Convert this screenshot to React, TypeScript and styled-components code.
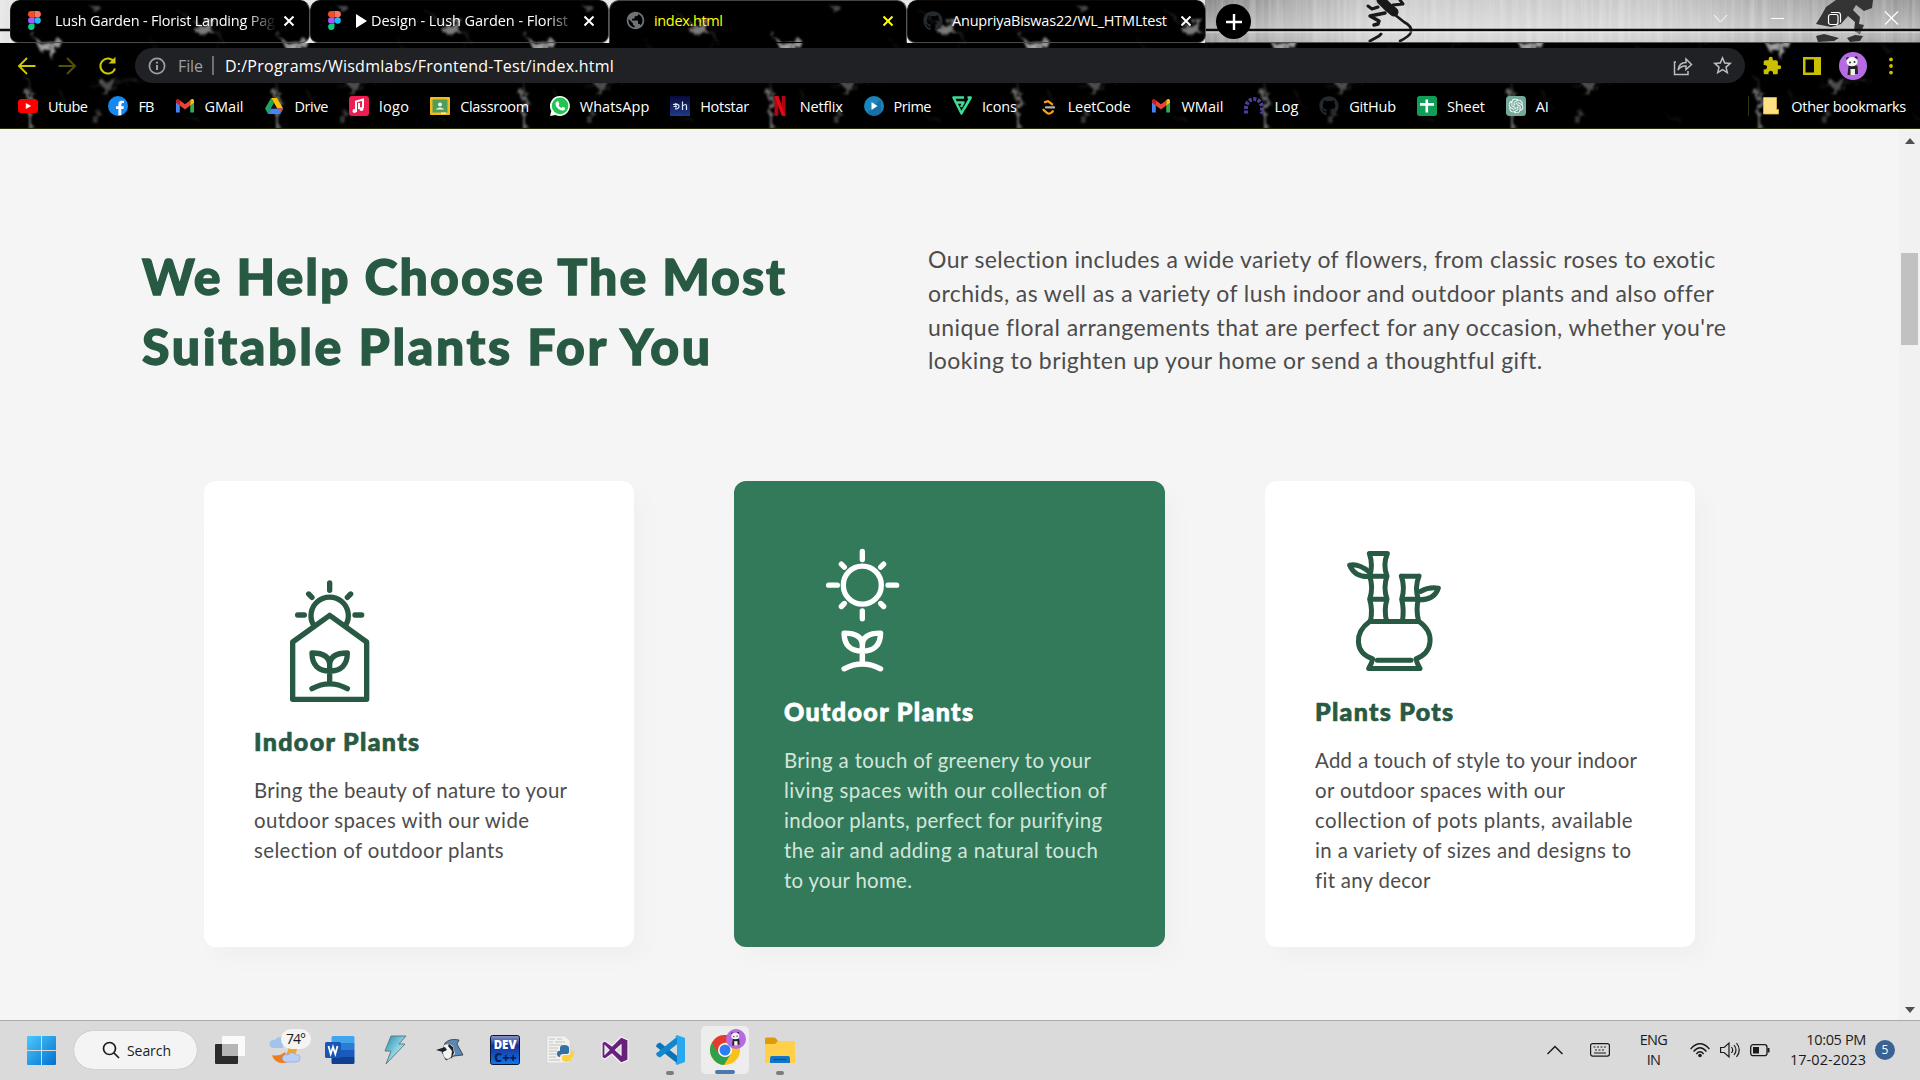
import React, { useLayoutEffect, useRef, useState } from "react";
import styled, { createGlobalStyle, css } from "styled-components";
import { MdExtension, MdStarBorder, MdPublic } from "react-icons/md";
import { FaGithub, FaFacebookF } from "react-icons/fa";
import { SiOpenai } from "react-icons/si";

const ui = `"Open Sans", "Noto Sans", sans-serif`;
const copy = `Lato, "Open Sans", sans-serif`;

const Global = createGlobalStyle`
  *, *::before, *::after { box-sizing: border-box; }
  body { margin: 0; overflow: hidden; background: #f5f5f5; font-family: ${ui}; }
  svg { display: block; flex: none; }
`;

/* ---------- text that tracks itself out to a given measure ---------- */

const Tracked = styled.span`
  display: block;
  white-space: pre;
`;

function Fit({ w, children }: { w: number; children: string }) {
  const ref = useRef<HTMLSpanElement>(null);
  const [spacing, setSpacing] = useState(0);
  useLayoutEffect(() => {
    const range = document.createRange();
    range.selectNodeContents(ref.current!);
    const natural = range.getBoundingClientRect().width;
    setSpacing((w - natural) / (children.length - 1 || 1));
  }, [w, children]);
  return (
    <Tracked ref={ref} style={{ letterSpacing: spacing }}>
      {children}
    </Tracked>
  );
}

/* ---------- theme artwork ---------- */

const Backdrop = styled.svg`
  position: absolute;
  left: 0;
  top: 0;
  width: 100%;
  height: 100%;
  pointer-events: none;
`;

function Marble({ x, y, w, h }: { x: number; y: number; w: number; h: number }) {
  const id = `marble-${x}-${y}`;
  return (
    <Backdrop viewBox={`${x} ${y} ${w} ${h}`} preserveAspectRatio="none">
      <defs>
        <filter id={`${id}-rough`} x="-30%" y="-30%" width="160%" height="160%">
          <feTurbulence type="fractalNoise" baseFrequency="0.13" numOctaves="4" seed="8" result="n" />
          <feDisplacementMap in="SourceGraphic" in2="n" scale="14" xChannelSelector="R" yChannelSelector="G" />
          <feGaussianBlur stdDeviation="1.2" />
        </filter>
        <pattern id={id} width="247" height="129" patternUnits="userSpaceOnUse">
          <g filter={`url(#${id}-rough)`} fill="#fff" stroke="#fff" strokeLinecap="round">
            <path d="M36 41l12 3 10-4 2 4-7 5 1 9-6-6-10-5z" opacity=".6" strokeWidth="0" />
            <path d="M46 46l6 12M38 42l-8-8" opacity=".25" strokeWidth="2" fill="none" />
            <path d="M190 20l8 6 14-5 2 16-8-3-8-2z" opacity=".48" strokeWidth="0" />
            <path d="M190 18l-9-7M214 34l8 8" opacity=".18" strokeWidth="2" fill="none" />
            <path d="M88 3l10 0 5 7-9 1z" opacity=".28" strokeWidth="0" />
            <path d="M100 82l10 1 5-6-2 13-7 6-3-8z" opacity=".3" strokeWidth="0" />
            <path d="M112 82l28-2M104 84l-12 3" opacity=".12" strokeWidth="2" fill="none" />
            <path d="M27 92l4 9-2 12 1 16" opacity=".42" strokeWidth="4.5" fill="none" />
            <path d="M31 94l-5-18M31 107l5-3" opacity=".2" strokeWidth="2" fill="none" />
            <path d="M96 110l4 6-6 6" opacity=".28" strokeWidth="2.5" fill="none" />
            <path d="M184 116l12 4M60 90l8 20M150 40l10 12" opacity=".08" strokeWidth="2" fill="none" />
          </g>
        </pattern>
      </defs>
      <rect x={x} y={y} width={w} height={h} fill={`url(#${id})`} />
    </Backdrop>
  );
}

function SteelBackdrop() {
  return (
    <Backdrop viewBox="0 0 1920 43" preserveAspectRatio="none">
      <defs>
        <linearGradient id="steel" gradientUnits="userSpaceOnUse" x1="1205" x2="1920">
          <stop offset="0" stopColor="#858585" />
          <stop offset=".1" stopColor="#a4a4a4" />
          <stop offset=".25" stopColor="#cdcdcd" />
          <stop offset=".6" stopColor="#c9c9c9" />
          <stop offset=".8" stopColor="#acacac" />
          <stop offset="1" stopColor="#949494" />
        </linearGradient>
        <filter id="brushed" x="0" y="0" width="100%" height="100%">
          <feTurbulence type="fractalNoise" baseFrequency="0.16 0.004" numOctaves="3" seed="4" />
          <feColorMatrix values="0 0 0 0 1  0 0 0 0 1  0 0 0 0 1  1.7 0 0 0 -.62" />
        </filter>
        <linearGradient id="glow" x1="0" x2="0" y1="0" y2="1">
          <stop offset="0" stopColor="#fff" stopOpacity="0" />
          <stop offset=".7" stopColor="#fff" stopOpacity=".32" />
          <stop offset="1" stopColor="#fff" stopOpacity=".1" />
        </linearGradient>
      </defs>
      <rect width="1205" height="43" fill="#e4e4e4" />
      <rect x="1205" width="715" height="43" fill="url(#steel)" />
      <rect width="1920" height="43" filter="url(#brushed)" opacity=".35" />
      <rect x="1205" width="715" height="43" fill="url(#glow)" />
      <g fill="none" stroke="#191919" strokeLinecap="round" strokeLinejoin="round">
        <path d="M1381 0l7 7 6 5" strokeWidth="9" />
        <path d="M1378 7l-6 2-4-3M1400 0l3 4-10 1" strokeWidth="3" />
        <path d="M1385 13l-15 3 9 5-1 3-4 1" strokeWidth="3.5" />
        <path d="M1394 14l10 8c6 3 8 6 7 10-1 4-7 7-11 9" strokeWidth="2.6" />
        <path d="M1370 41l9-5 2-2" strokeWidth="3" />
      </g>
      <g fill="#343434">
        <path d="M1826 7l10-7h37l-1 8-8 3-8-6-3 5 7 7-1 7 5 1-4 9-6-3 1-9-7-6-7 8-10 3-15-3 5-8z" />
        <path d="M1816 36l8-2 15 4-5 3-16 1zM1847 38l8-3 8 1-3 5-10 1z" />
      </g>
      <path d="M0 30h1920" stroke="#0b0b0b" strokeWidth="2.4" />
      <path d="M1205 32h715" stroke="#fff" strokeOpacity=".55" strokeWidth="1" />
      <path d="M1205 42.5h715" stroke="#555" />
    </Backdrop>
  );
}

/* ---------- browser chrome ---------- */

const Browser = styled.header`
  height: 129px;
  background: #000;
  display: flex;
  flex-direction: column;
  color: #fff;
  font-size: 14.5px;
`;

const TabStrip = styled.div`
  position: relative;
  height: 43px;
  padding-left: 10px;
  display: flex;
  align-items: flex-start;
`;

const TabBox = styled.div<{ $active?: boolean; $w: number }>`
  position: relative;
  overflow: hidden;
  width: ${(p) => p.$w}px;
  height: 43px;
  padding: 0 12px 2px 15px;
  background: #000;
  border: 1px solid #555;
  border-top-color: ${(p) => (p.$active ? "#444" : "#0a0a0a")};
  border-left-color: ${(p) => (p.$active ? "#444" : "#1c1c1c")};
  border-bottom-color: ${(p) => (p.$active ? "#000" : "#4a4a4a")};
  border-radius: 10px 10px ${(p) => (p.$active ? "0 0" : "8px 8px")};
  display: flex;
  align-items: center;
  color: ${(p) => (p.$active ? "#ff0" : "#fff")};
  & > * { flex: none; }
`;

const TabIcon = styled.div`
  width: 20px;
  display: flex;
  justify-content: center;
  position: relative;
`;

const TabTitle = styled.div<{ $fade?: boolean }>`
  position: relative;
  margin-left: 9px;
  width: 222px;
  display: flex;
  align-items: center;
  gap: 4px;
  overflow: hidden;
  ${(p) => p.$fade && css`mask-image: linear-gradient(90deg, #000 86%, transparent 100%);`}
`;

const CloseIcon = styled.svg`
  position: relative;
  margin-left: 6px;
  width: 12px;
  height: 12px;
`;

const NewTab = styled.div`
  position: relative;
  margin: 4px 0 0 10px;
  width: 35px;
  height: 35px;
  border-radius: 50%;
  background: #000;
  display: grid;
  place-items: center;
`;

const WindowControls = styled.div`
  position: relative;
  margin-left: auto;
  padding: 10px 21px 0 0;
  display: flex;
  gap: 42px;
`;

const Toolbar = styled.div`
  position: relative;
  height: 86px;
  border-bottom: 1px solid #2d2c08;
`;

const NavRow = styled.div`
  position: relative;
  height: 44px;
  padding: 5px 25px 4px 17px;
  display: flex;
  align-items: center;
`;

const NavButtons = styled.div`
  width: 118px;
  flex: none;
  display: flex;
  align-items: center;
  gap: 20px;
`;

const Address = styled.div`
  width: 1610px;
  flex: none;
  height: 35px;
  border-radius: 18px;
  background: #202124;
  display: flex;
  align-items: center;
  padding: 0 11px 0 13px;
  font-size: 16px;
`;

const Scheme = styled.div`
  margin-left: 12px;
  color: #9aa0a6;
`;

const Divider = styled.div`
  width: 2px;
  height: 19px;
  margin: 0 11px 0 9px;
  background: #6d7074;
`;

const AddressActions = styled.div`
  margin-left: auto;
  display: flex;
  align-items: center;
  gap: 18px;
  color: #b9bcc0;
`;

const Extensions = styled.div`
  margin-left: auto;
  width: 133px;
  display: grid;
  grid-template-columns: 41px 36px 49px 6px;
  align-items: center;
  color: #cbc000;
`;

const BookmarkRow = styled.nav`
  position: relative;
  height: 41px;
  padding: 0 14px 3px 18px;
  display: flex;
  align-items: center;
  gap: 20.9px;
`;

const Bookmark = styled.div`
  display: flex;
  align-items: center;
  gap: 10px;
`;

const OtherBookmarks = styled.div`
  margin-left: auto;
  padding-left: 14px;
  height: 20px;
  border-left: 1px solid #37370b;
  display: flex;
  align-items: center;
  gap: 10px;
`;

function Figma() {
  return (
    <svg width="17" height="19" viewBox="0 0 17 19">
      <path d="M3.2 0h3.3v6.3H3.2a3.15 3.15 0 010-6.3z" fill="#f24e1e" />
      <path d="M6.5 0h3.2a3.15 3.15 0 010 6.3H6.5z" fill="#ff7262" />
      <path d="M3.2 6.3h3.3v6.3H3.2a3.15 3.15 0 010-6.3z" fill="#a259ff" />
      <circle cx="9.7" cy="9.5" r="3.15" fill="#1abcfe" />
      <path d="M3.2 12.7h3.3v3.1a3.2 3.2 0 11-3.3-3.1z" fill="#0acf83" />
    </svg>
  );
}

function Close() {
  return (
    <CloseIcon viewBox="0 0 12 12" fill="none" stroke="currentColor" strokeWidth="2">
      <path d="M1.5 1.5l9 9M10.5 1.5l-9 9" />
    </CloseIcon>
  );
}

function Panda({ size }: { size: number }) {
  return (
    <svg width={size} height={size} viewBox="0 0 28 28">
      <circle cx="14" cy="14" r="14" fill="#b66be2" />
      <path d="M9.500 14q4.500-2 9 0l.5 8h-3v-4h-4v5H8.500z" fill="#222" />
      <path d="M11.500 17h4.500v6h-4.500z" fill="#eee" />
      <circle cx="8.8" cy="6.5" r="1.600" fill="#222" />
      <circle cx="17" cy="5.8" r="1.600" fill="#222" />
      <ellipse cx="13" cy="9.700" rx="5.600" ry="4.600" fill="#f5f5f5" />
      <circle cx="11" cy="10.5" r="1" fill="#333" />
      <circle cx="15.5" cy="10" r="1" fill="#333" />
    </svg>
  );
}

const GmailIcon = () => (
  <svg width="20" height="20" viewBox="0 0 20 20">
    <path d="M1 5v11.5h3.8V8z" fill="#4285f4" />
    <path d="M15.2 8v8.5H19V5z" fill="#34a853" />
    <path d="M15.2 4.8V9.5L19 6.700V5c0-2-2-2.500-3.300-1.400z" fill="#fbbc04" />
    <path d="M1 5v1.700l3.800 2.800V4.800l-.5-1.200C3 2.500 1 3.200 1 5z" fill="#c5221f" />
    <path d="M4.8 4.300v5.200L10 13.400l5.200-3.900V4.300L10 8.200z" fill="#ea4335" />
  </svg>
);

const bookmarks: { label: string; w: number; icon: React.ReactNode }[] = [
  { label: "Utube", w: 40, icon: (
    <svg width="20" height="20" viewBox="0 0 20 20"><rect y="3" width="20" height="14" rx="3.6" fill="#f00" /><path d="M7.8 7l5.400 3-5.400 3z" fill="#fff" /></svg>) },
  { label: "FB", w: 16, icon: (
    <svg width="20" height="20" viewBox="0 0 20 20"><circle cx="10" cy="10" r="10" fill="#1589f0" /><FaFacebookF x="4.5" y="4.5" width="11" height="15" color="#fff" size="15" /></svg>) },
  { label: "GMail", w: 39, icon: <GmailIcon /> },
  { label: "Drive", w: 34, icon: (
    <svg width="20" height="20" viewBox="0 0 20 20"><path d="M7 2h6l6.200 10.500h-6z" fill="#fbbc04" /><path d="M7 2l3 5.200L4 18 1 12.500z" fill="#1fa463" /><path d="M6.8 12.500h12.400L16.200 18H4z" fill="#4285f4" /><path d="M13.200 12.500h6L17.400 15.800z" fill="#ea4335" /><path d="M10 7.200l3.200 5.300H6.900z" fill="#111" /></svg>) },
  { label: "logo", w: 30, icon: (
    <svg width="20" height="20" viewBox="0 0 20 20"><rect width="20" height="20" rx="3" fill="#ee1d50" /><path d="M7 14V5.500l7-2V12M7 14v2M10 13V7" stroke="#fff" strokeWidth="2" fill="none" /><circle cx="5.500" cy="15" r="2" fill="#fff" /><circle cx="12.500" cy="13" r="2" fill="#fff" /></svg>) },
  { label: "Classroom", w: 69, icon: (
    <svg width="20" height="20" viewBox="0 0 20 20"><rect y="1" width="20" height="18" rx="1" fill="#f6bc16" /><rect x="2.500" y="3.500" width="15" height="13" fill="#4f9d59" /><circle cx="10" cy="8.500" r="2" fill="#e9f5ea" /><path d="M5.500 13.500q4.500-3.800 9 0z" fill="#e9f5ea" /><path d="M11 16.500h5v1.400h-5z" fill="#eee" /></svg>) },
  { label: "WhatsApp", w: 69.5, icon: (
    <svg width="20" height="20" viewBox="0 0 20 20"><path d="M10 0a10 10 0 11-4.500 19L0 20l1.300-5A10 10 0 0110 0z" fill="#f3fff5" /><circle cx="10.100" cy="9.900" r="8.300" fill="#22c552" /><path d="M6.700 5.500l1.500-.2 1.200 2.700-.9 1.200q1 2 3 2.800l1.100-1.300 2.600 1.200c.1 2-1.600 2.700-3 2.500-3.500-.5-6.500-3.700-6.700-6.500 0-.900.500-1.900 1.200-2.400z" fill="#fff" /></svg>) },
  { label: "Hotstar", w: 49, icon: (
    <svg width="20" height="20" viewBox="0 0 20 20"><defs><linearGradient id="hs" x2="0" y2="1"><stop stopColor="#0a0a3a" /><stop offset="1" stopColor="#1f3a8a" /></linearGradient></defs><rect width="20" height="20" fill="url(#hs)" /><path d="M3 8.500q6.500-1.500 6 2.500-1.200 2.500-4 1.800M5.800 7v4.500M3.500 10.500h3.500M12.500 5.500V14M12.500 10q4-3 4 0v4" stroke="#dfe6ff" strokeWidth="1.200" fill="none" /></svg>) },
  { label: "Netflix", w: 43, icon: (
    <svg width="20" height="20" viewBox="0 0 20 20"><path d="M4.500 0h3.800v19.500l-3.800.5zM11.700 0h3.800v20l-3.800-.5z" fill="#b1060f" /><path d="M4.500 0h3.800l7.200 20-3.900-.5z" fill="#e50914" /></svg>) },
  { label: "Prime", w: 38, icon: (
    <svg width="20" height="20" viewBox="0 0 20 20"><circle cx="10" cy="10" r="10" fill="#1a86bd" /><path d="M3 17a10 10 0 0014 0V3z" fill="#17669b" opacity=".7" /><path d="M7.500 6l6 4-6 4z" fill="#fff" /></svg>) },
  { label: "Icons", w: 35, icon: (
    <svg width="20" height="20" viewBox="0 0 20 20" fill="none" stroke="#3ddc97" strokeWidth="2.500" strokeLinejoin="round"><path d="M12 1.500H1.500L9.500 17.500l2.500-5M5 6.500h6.500L9 11" /><path d="M15.500 1.500h3.200L12 13" /></svg>) },
  { label: "LeetCode", w: 63, icon: (
    <svg width="20" height="20" viewBox="0 0 20 20" fill="none" strokeWidth="2.300" strokeLinecap="round"><path d="M7 6.200l3-1 4 3" stroke="#ffa116" /><path d="M5.500 13.800l4 3.500q2 1 4-.8l1.300-1.200" stroke="#ffa116" /><path d="M8 11.400h8" stroke="#b3b3b3" /></svg>) },
  { label: "WMail", w: 42, icon: <GmailIcon /> },
  { label: "Log", w: 24, icon: (
    <svg width="20" height="20" viewBox="0 0 20 20"><path d="M2 17.500v-5C2 0 18 0 18 12.500v5" stroke="#4e3f96" strokeWidth="4" strokeDasharray="3 1.500" fill="none" /></svg>) },
  { label: "GitHub", w: 47, icon: <FaGithub size={20} color="#24292e" /> },
  { label: "Sheet", w: 38, icon: (
    <svg width="20" height="20" viewBox="0 0 20 20"><rect width="20" height="20" rx="2.500" fill="#0f9d58" /><path d="M9.800 3.500v13M3 8.400h14" stroke="#fff" strokeWidth="2.600" /></svg>) },
  { label: "AI", w: 13, icon: (
    <svg width="20" height="20" viewBox="0 0 20 20"><rect width="20" height="20" rx="3.500" fill="#74aa9c" /><SiOpenai x="2.500" y="2.500" size={15} color="#fff" /></svg>) },
];

function BrowserChrome() {
  return (
    <Browser>
      <TabStrip>
        <SteelBackdrop />
        <TabBox $w={300}>
          <Marble x={10} y={0} w={300} h={43} />
          <TabIcon><Figma /></TabIcon>
          <TabTitle $fade><Fit w={220}>Lush Garden - Florist Landing Pag</Fit></TabTitle>
          <Close />
        </TabBox>
        <TabBox $w={299}>
          <Marble x={310} y={0} w={299} h={43} />
          <TabIcon><Figma /></TabIcon>
          <TabTitle $fade>
            <svg width="12" height="14" viewBox="0 0 12 14"><path d="M1 0l11 7-11 7z" fill="#fff" /></svg>
            <Fit w={197}>Design - Lush Garden - Florist</Fit>
          </TabTitle>
          <Close />
        </TabBox>
        <TabBox $w={298} $active>
          <Marble x={609} y={0} w={298} h={43} />
          <TabIcon><MdPublic size={21} color="#6e7378" /></TabIcon>
          <TabTitle><Fit w={69}>index.html</Fit></TabTitle>
          <Close />
        </TabBox>
        <TabBox $w={299}>
          <Marble x={907} y={0} w={299} h={43} />
          <TabIcon><FaGithub size={20} color="#24292e" /></TabIcon>
          <TabTitle><Fit w={215}>AnupriyaBiswas22/WL_HTMLtest</Fit></TabTitle>
          <Close />
        </TabBox>
        <NewTab>
          <svg width="16" height="16" viewBox="0 0 16 16" stroke="#fff" strokeWidth="2.400"><path d="M8 0v16M0 8h16" /></svg>
        </NewTab>
        <WindowControls>
          <svg width="15" height="16" viewBox="0 0 15 16" fill="none" stroke="#fff"><path d="M1 5l6.500 7L14 5" /></svg>
          <svg width="15" height="16" viewBox="0 0 15 16" fill="none" stroke="#fff"><path d="M1 8.500h13" /></svg>
          <svg width="15" height="16" viewBox="0 0 15 16" fill="none" stroke="#fff" strokeWidth="1.200"><rect x="1.500" y="4.500" width="9.500" height="10" rx="2" /><path d="M4 2.500h7q2.500 0 2.500 2.500v7.500" /></svg>
          <svg width="15" height="16" viewBox="0 0 15 16" fill="none" stroke="#fff" strokeWidth="1.200"><path d="M1 1.500l13 13M14 1.500l-13 13" /></svg>
        </WindowControls>
      </TabStrip>
      <Toolbar>
        <Marble x={0} y={43} w={1920} h={86} />
        <NavRow>
          <NavButtons>
            <svg width="20" height="20" viewBox="0 0 20 20" fill="none" stroke="#cfc700" strokeWidth="1.900"><path d="M18.500 10H3M10 2l-8 8 8 8" /></svg>
            <svg width="20" height="20" viewBox="0 0 20 20" fill="none" stroke="#554f08" strokeWidth="1.900"><path d="M1.500 10H17M10 2l8 8-8 8" /></svg>
            <svg width="21" height="20" viewBox="0 0 21 20" fill="none" stroke="#cfc700" strokeWidth="2"><path d="M17.200 6A7.500 7.500 0 1018 12.500" /><path d="M11.500 7.500h7V.8z" fill="#cfc700" stroke="none" /></svg>
          </NavButtons>
          <Address>
            <svg width="18" height="18" viewBox="0 0 18 18" fill="none" stroke="#9aa0a6" strokeWidth="1.700"><circle cx="9" cy="9" r="7.600" /><path d="M9 8v5M9 4.800v1.800" strokeWidth="2" /></svg>
            <Scheme><Fit w={25}>File</Fit></Scheme>
            <Divider />
            <Fit w={389}>D:/Programs/Wisdmlabs/Frontend-Test/index.html</Fit>
            <AddressActions>
              <svg width="20" height="20" viewBox="0 0 20 20" fill="none" stroke="currentColor" strokeWidth="1.500"><path d="M3 6H1.500v12.500H15V15M5 14q1-7.500 8-7.500V3l5.500 5.500L13 13.500v-3.500q-5-.5-8 4z" /></svg>
              <MdStarBorder size={23} />
            </AddressActions>
          </Address>
          <Extensions>
            <MdExtension size={20} />
            <svg width="18" height="18" viewBox="0 0 18 18"><path fillRule="evenodd" d="M0 0h18v18H0zM2.500 2.500v13H11v-13z" fill="currentColor" /></svg>
            <Panda size={28} />
            <svg width="6" height="18" viewBox="0 0 6 18" fill="currentColor"><circle cx="3" cy="2.400" r="1.900" /><circle cx="3" cy="9" r="1.900" /><circle cx="3" cy="15.600" r="1.900" /></svg>
          </Extensions>
        </NavRow>
        <BookmarkRow>
          {bookmarks.map((b) => (
            <Bookmark key={b.label}>
              {b.icon}
              <Fit w={b.w}>{b.label}</Fit>
            </Bookmark>
          ))}
          <OtherBookmarks>
            <svg width="18" height="18" viewBox="0 0 18 18"><path d="M.5.5h13v12h2V17H.5z" fill="#ffe083" stroke="#e8b93c" strokeWidth=".8" /></svg>
            <Fit w={115}>Other bookmarks</Fit>
          </OtherBookmarks>
        </BookmarkRow>
      </Toolbar>
    </Browser>
  );
}

/* ---------- web page ---------- */

const Viewport = styled.div`
  height: 891px;
  display: flex;
`;

const Page = styled.main`
  flex: 1;
  background: #f5f5f5;
  font-family: ${copy};
  color: #4c4c4c;
`;

const Intro = styled.section`
  height: 352px;
  padding: 112px 0 0 142px;
  display: grid;
  grid-template-columns: 786px 820px;
  align-items: start;
`;

const Heading = styled.h1`
  margin: 0;
  font-size: 50px;
  line-height: 70px;
  font-weight: 900;
  color: #285943;
  -webkit-text-stroke: 1.3px #285943;
`;

const Lead = styled.p`
  margin: 2px 0 0;
  font-size: 23px;
  line-height: 33.75px;
`;

const Cards = styled.section`
  padding-left: 204px;
  display: grid;
  grid-template-columns: 430px 431px 430px;
  column-gap: 100px;
`;

const Card = styled.article<{ $filled?: boolean }>`
  height: 466px;
  padding: 1px 50px 0;
  border-radius: 12px;
  display: flex;
  flex-direction: column;
  justify-content: center;
  background: ${(p) => (p.$filled ? "#337a5b" : "#fff")};
  color: ${(p) => (p.$filled ? "#d3e6dc" : "inherit")};
  box-shadow: 10px 12px 24px rgba(0, 0, 0, 0.025);
`;

const CardTitle = styled.h2<{ $filled?: boolean }>`
  margin: 12px 0 19px;
  font-size: 25px;
  line-height: 30px;
  font-weight: 900;
  color: ${(p) => (p.$filled ? "#fff" : "#285943")};
  -webkit-text-stroke: ${(p) => (p.$filled ? "0.8px #fff" : "0.7px #285943")};
`;

const CardText = styled.p`
  margin: 0;
  font-size: 20.4px;
  line-height: 30px;
`;

const Scrollbar = styled.aside`
  width: 21px;
  background: #f1f1f1;
  display: flex;
  flex-direction: column;
  align-items: center;
  padding: 9px 0 7px;
`;

const Thumb = styled.div`
  width: 17px;
  height: 92px;
  margin: 109px 0 auto;
  background: #c1c1c1;
`;

const sprout = "M0 0C-1-18-14-34-53-34C-53 2-34 20 0 20C34 20 53 2 53-34C14-34 1-18 0 0V58M-53 73Q0 44 53 73";

function IndoorIcon() {
  return (
    <svg width="150" height="150" viewBox="0 0 150 150">
      <g transform="translate(-14 -3) scale(.33333)" fill="none" stroke="#285943" strokeWidth="16" strokeLinecap="round" strokeLinejoin="round">
        <path d="M221 193A56 56 0 11317 193M269 66v22M206 99l10 10M332 99l-10 10M173 162h20M345 162h20" />
        <path d="M158 415V243l111-80 111 80v172z" />
        <path transform="translate(269 310)" d={sprout} />
      </g>
    </svg>
  );
}

function OutdoorIcon() {
  return (
    <svg width="150" height="150" viewBox="0 0 150 150">
      <g transform="translate(-4 -3.500) scale(.33333)" fill="none" stroke="#fff" strokeWidth="16" strokeLinecap="round">
        <circle cx="247" cy="164" r="57" />
        <path d="M247 63v24M247 241v24M146 164h26M324 164h26M184 101l9 9M311 101l-9 9M184 228l9-9M311 228l-9-9" />
        <path transform="translate(247 342) scale(1.030 1)" d={sprout} strokeLinejoin="round" />
      </g>
    </svg>
  );
}

function PotIcon() {
  return (
    <svg width="150" height="150" viewBox="0 0 150 150">
      <g transform="translate(-5 -3.500) scale(.33333)" fill="none" stroke="#285943" strokeWidth="15" strokeLinecap="round" strokeLinejoin="round">
        <path d="M178 69h54M179 137h52M179 206h52M178 69q12 34 1 68q12 34 0 69q10 32 2 67M232 69q-14 34-1 68q-12 34 0 69q-10 32 -1 67" />
        <path d="M274 137h53M275 206h50M274 137q12 34 1 69q8 32 2 67M327 137q-14 34-2 69q-8 32 1 67" />
        <path d="M179 273h148C376 307 369 366 318 385q2 12 12 29H176q10-17 12-29C133 366 132 307 179 273zM202 389h101" />
        <path d="M177 124Q145 98 119 104Q134 139 175 138M331 183Q356 169 385 173Q373 208 330 208" />
      </g>
    </svg>
  );
}

type CardData = { title: string; tw: number; filled?: boolean; icon: React.ReactNode; lines: [string, number][] };

const cards: CardData[] = [
  { title: "Indoor Plants", tw: 165, icon: <IndoorIcon />, lines: [
    ["Bring the beauty of nature to your", 313],
    ["outdoor spaces with our wide", 275],
    ["selection of outdoor plants", 250],
  ] },
  { title: "Outdoor Plants", tw: 189, filled: true, icon: <OutdoorIcon />, lines: [
    ["Bring a touch of greenery to your", 307],
    ["living spaces with our collection of", 323],
    ["indoor plants, perfect for purifying", 318],
    ["the air and adding a natural touch", 314],
    ["to your home.", 128],
  ] },
  { title: "Plants Pots", tw: 138, icon: <PotIcon />, lines: [
    ["Add a touch of style to your indoor", 322],
    ["or outdoor spaces with our", 250],
    ["collection of pots plants, available", 318],
    ["in a variety of sizes and designs to", 316],
    ["fit any decor", 115],
  ] },
];

function WebPage() {
  return (
    <Viewport>
      <Page>
        <Intro>
          <Heading>
            <Fit w={643}>We Help Choose The Most</Fit>
            <Fit w={568}>Suitable Plants For You</Fit>
          </Heading>
          <Lead>
            <Fit w={788}>Our selection includes a wide variety of flowers, from classic roses to exotic</Fit>
            <Fit w={785}>orchids, as well as a variety of lush indoor and outdoor plants and also offer</Fit>
            <Fit w={798}>unique floral arrangements that are perfect for any occasion, whether you're</Fit>
            <Fit w={613}>looking to brighten up your home or send a thoughtful gift.</Fit>
          </Lead>
        </Intro>
        <Cards>
          {cards.map((c) => (
            <Card key={c.title} $filled={c.filled}>
              {c.icon}
              <CardTitle $filled={c.filled}><Fit w={c.tw}>{c.title}</Fit></CardTitle>
              <CardText>
                {c.lines.map(([text, w]) => <Fit key={text} w={w}>{text}</Fit>)}
              </CardText>
            </Card>
          ))}
        </Cards>
      </Page>
      <Scrollbar>
        <svg width="10" height="6" viewBox="0 0 10 6"><path d="M0 6l5-6 5 6z" fill="#505050" /></svg>
        <Thumb />
        <svg width="10" height="6" viewBox="0 0 10 6"><path d="M0 0l5 6 5-6z" fill="#505050" /></svg>
      </Scrollbar>
    </Viewport>
  );
}

/* ---------- taskbar ---------- */

const Taskbar = styled.footer`
  height: 60px;
  border-top: 1px solid #aaa;
  background: #dadada;
  display: flex;
  align-items: center;
  padding: 0 25px 1px 27px;
  color: #1b1b1b;
`;

const SearchBox = styled.div`
  margin: 0 5px 0 18px;
  width: 123px;
  height: 38px;
  border-radius: 19px;
  background: #f4f4f4;
  box-shadow: 0 0 1px #999;
  display: flex;
  align-items: center;
  gap: 7px;
  padding-left: 28px;
  font-size: 14px;
`;

const Slot = styled.div`
  position: relative;
  width: 55px;
  height: 59px;
  display: grid;
  place-items: center;
`;

const ActivePlate = styled.div`
  position: relative;
  width: 48px;
  height: 48px;
  border-radius: 5px;
  background: #ededed;
  display: grid;
  place-items: center;
`;

const Running = styled.div<{ $active?: boolean }>`
  position: absolute;
  left: 50%;
  bottom: ${(p) => (p.$active ? 0 : 5)}px;
  width: ${(p) => (p.$active ? 20 : 8)}px;
  height: 4px;
  transform: translateX(-50%);
  border-radius: 2px;
  background: ${(p) => (p.$active ? "#4a79ab" : "#7c7c7c")};
`;

const ProfileBadge = styled.div`
  position: absolute;
  right: 3px;
  top: 3px;
`;

const TempBadge = styled.div`
  position: absolute;
  right: 1px;
  top: 8px;
  width: 30px;
  height: 20px;
  border-radius: 10px;
  background: #f4f4f4;
  padding-left: 5px;
  font-size: 14px;
  line-height: 20px;
`;

const Tray = styled.div`
  margin-left: auto;
  display: flex;
  align-items: center;
  font-size: 14.5px;
  line-height: 20px;
`;

const TrayTools = styled.div`
  display: flex;
  align-items: center;
  gap: 27px;
`;

const Language = styled.div`
  margin: 0 23px 0 30px;
  display: flex;
  flex-direction: column;
  align-items: center;
`;

const StatusIcons = styled.div`
  display: flex;
  gap: 10px;
`;

const Clock = styled.div`
  margin: 0 9px 0 20px;
  display: flex;
  flex-direction: column;
  align-items: flex-end;
`;

const Count = styled.div`
  width: 20px;
  height: 20px;
  border-radius: 50%;
  background: #3a6292;
  color: #fff;
  font-size: 12px;
  line-height: 20px;
  text-align: center;
`;

function TaskbarIcons() {
  return (
    <>
      <Slot>
        <svg width="30" height="30" viewBox="0 0 30 30"><rect y="9" width="23" height="20" rx="1" fill="#2b2b2b" /><rect x="7" y="1" width="23" height="20" rx="1" fill="#fdfdfd" opacity=".9" /><path d="M7 9h16v12H7z" fill="#b5b5b5" /></svg>
      </Slot>
      <Slot>
        <svg width="34" height="30" viewBox="0 0 34 30"><path d="M5 13q-5-1-3-6 2-3 5-2 3-5 8-2v10z" fill="#a3c2ec" /><path d="M20 10q3-3 7-8 4 8 1 16-6 9-14 10-7 0-10-7 18 3 16-11z" fill="#f7a51e" /><path d="M4 20q7 2 13-3l3 10q-11 4-16-7z" fill="#ee7b22" /><path d="M17 27q-5-3-1-7 2-1 4 0 4-5 8 0 4-1 4 3 0 4-4 4z" fill="#b8d0f5" stroke="#86a8dc" strokeWidth=".7" /></svg>
        <TempBadge><Fit w={20}>74°</Fit></TempBadge>
      </Slot>
      <Slot>
        <svg width="30" height="28" viewBox="0 0 30 28"><path d="M8 0h20q1.500 0 1.500 1.500V7H6.500V1.500Q6.500 0 8 0z" fill="#41a5ee" /><path d="M6.500 7h23v7h-23z" fill="#2b7cd3" /><path d="M6.500 14h23v7h-23z" fill="#185abd" /><path d="M6.500 21h23v5.500Q29.500 28 28 28H8q-1.500 0-1.500-1.500z" fill="#103f91" /><rect y="6" width="16" height="16" rx="1.500" fill="#1a56b4" /><path d="M3.500 10l2.200 8L8 11l2.300 7 2.200-8" fill="none" stroke="#fff" strokeWidth="1.800" /></svg>
      </Slot>
      <Slot>
        <svg width="24" height="30" viewBox="0 0 24 30"><defs><linearGradient id="bolt" x2="1" y2="1"><stop stopColor="#1d8fae" /><stop offset=".6" stopColor="#9fdcea" /><stop offset="1" stopColor="#3aa3bd" /></linearGradient></defs><path d="M8 1h15l-7 8h6L3 29l5-13H2z" fill="url(#bolt)" stroke="#5d7d86" strokeWidth="1" /></svg>
      </Slot>
      <Slot>
        <svg width="28" height="24" viewBox="0 0 28 24"><path d="M9 5Q14 0 23 2l-2 4 6 11-9 1-8 4-4-8z" fill="#5b88b5" stroke="#333" strokeWidth=".8" /><path d="M8 7q6-2 9 1l2 8-7 5q-5-1-5-7z" fill="#f3f3f3" /><path d="M0 12l9-3 2 3-4 2zM13 6l4 3 1 6-3 6 1-8-4-5z" fill="#222" /></svg>
      </Slot>
      <Slot>
        <svg width="30" height="30" viewBox="0 0 30 30"><defs><linearGradient id="dev" x2="0" y2="1"><stop stopColor="#8a98c8" /><stop offset=".35" stopColor="#1d2f92" /><stop offset="1" stopColor="#0a7af0" /></linearGradient></defs><rect x=".5" y=".5" width="29" height="29" rx="2" fill="url(#dev)" stroke="#0a1530" /><text x="15" y="14" textAnchor="middle" fontFamily="Open Sans, sans-serif" fontWeight="800" fontSize="11.500" fill="#fff">DEV</text><text x="15.500" y="26.500" textAnchor="middle" fontFamily="Open Sans, sans-serif" fontWeight="800" fontSize="12.500" fill="#06205c">C++</text></svg>
      </Slot>
      <Slot>
        <svg width="28" height="30" viewBox="0 0 28 30"><path d="M1 1h18l5 5v22H1z" fill="#f1f1ee" stroke="#d0d0d0" strokeWidth=".6" /><path d="M3 4h6M11 4h5M3 7h4M9 7h10M3 10h13M3 13h9M3 16h8M3 19h9M3 22h7M3 25h11" stroke="#c2c2c2" /><path d="M14 16v-3q0-3 4-3 5 0 5 3v4q0 2-3 2h-3q-3 0-3 3-3 0-3-3.500T14 16z" fill="#3470a3" /><path d="M25 15q3 0 3 4t-3 4v1q0 3-4 3-5 0-5-3v-2q0-2 3-2h3q3 0 3-3z" fill="#ffd140" /></svg>
      </Slot>
      <Slot>
        <svg width="28" height="28" viewBox="0 0 28 28"><path fillRule="evenodd" d="M20 1l7 3v20l-7 3-9-9-7 5-3-1.500v-15L4 5l7 5zM20 9l-5.500 5 5.500 5zM4 10v8l4-4z" fill="#68217a" stroke="#f5f0f6" strokeWidth="1.200" /></svg>
      </Slot>
      <Slot>
        <svg width="30" height="30" viewBox="0 0 30 30"><path d="M2 9l3-1.500 18 14V29L1 11.500z" fill="#0b73b8" /><path d="M2 21l3 1.500L23 8.500V1L1 18.500z" fill="#1187d0" /><path d="M22 0l8 3v24l-8 3-2-1.500q2 0 2-2V3.500q0-2-2-2z" fill="#29a8f2" /></svg>
        <Running />
      </Slot>
      <Slot>
        <ActivePlate>
          <svg width="30" height="30" viewBox="0 0 30 30"><circle cx="15" cy="15" r="15" fill="#fbc116" /><path d="M15 15L2 7.500A15 15 0 0014 30l7-11.500z" fill="#2da14c" /><path d="M2 7.500A15 15 0 0128 7.500H15L8.500 18.700z" fill="#e33b2e" /><circle cx="15" cy="15" r="7" fill="#fff" /><circle cx="15" cy="15" r="5.500" fill="#2f7cf0" /></svg>
          <ProfileBadge><Panda size={20} /></ProfileBadge>
          <Running $active />
        </ActivePlate>
      </Slot>
      <Slot>
        <svg width="30" height="27" viewBox="0 0 30 27"><path d="M0 2Q0 .5 1.500.5H10l3 3.500v5H0z" fill="#dd9b0c" /><path d="M0 7h10l3-3h15.500Q30 4 30 5.500V26H0z" fill="#ffd048" /><path d="M5 26v-5q0-2 2-2h16q2 0 2 2v5z" fill="#1377c9" /><path d="M8.500 22.500h13" stroke="#0c4f92" strokeWidth="1.300" /></svg>
        <Running />
      </Slot>
    </>
  );
}

function WindowsTaskbar() {
  return (
    <Taskbar>
      <svg width="29" height="29" viewBox="0 0 29 29"><defs><linearGradient id="win" x2="1" y2="1"><stop stopColor="#4cc9fb" /><stop offset="1" stopColor="#0370cf" /></linearGradient></defs><path d="M1 0h13v14H0V1q0-1 1-1zM15 0h13q1 0 1 1v13H15zM0 15h14v14H1q-1 0-1-1zM15 15h14v13q0 1-1 1H15z" fill="url(#win)" /></svg>
      <SearchBox>
        <svg width="18" height="18" viewBox="0 0 18 18" fill="none" stroke="#1b1b1b" strokeWidth="1.700"><circle cx="7.500" cy="7.500" r="6" /><path d="M12 12l5 5" /></svg>
        <Fit w={44}>Search</Fit>
      </SearchBox>
      <TaskbarIcons />
      <Tray>
        <TrayTools>
          <svg width="16" height="10" viewBox="0 0 16 10" fill="none" stroke="#1b1b1b" strokeWidth="1.500"><path d="M.5 9L8 1.500 15.500 9" /></svg>
          <svg width="20" height="14" viewBox="0 0 20 14" fill="none" stroke="#1b1b1b" strokeWidth="1.200"><rect x=".6" y=".6" width="18.800" height="12.500" rx="2" /><path d="M4 10h12M3.500 4h2M7 4h2M10.500 4h2M14 4h2M5 7h2M8.500 7h2M12 7h2" /></svg>
        </TrayTools>
        <Language>
          <Fit w={28}>ENG</Fit>
          <Fit w={14}>IN</Fit>
        </Language>
        <StatusIcons>
          <svg width="20" height="18" viewBox="0 0 20 18" fill="none" stroke="#1b1b1b" strokeWidth="1.300"><path d="M.6 8q9.400-10.500 18.800 0M3.500 10.500q6.500-7.500 13 0M6.300 13q3.700-4.500 7.400 0" /><circle cx="10" cy="14.500" r="1.800" fill="#1b1b1b" stroke="none" /></svg>
          <svg width="20" height="18" viewBox="0 0 20 18" fill="none" stroke="#1b1b1b" strokeWidth="1.200"><path d="M.6 6.500h3.500L9 2v14l-4.900-4.500H.6zM11.500 6q2.400 3 0 6M14 4q4 5 0 10M16.500 2q5.500 7 0 14" /></svg>
          <svg width="20" height="18" viewBox="0 0 20 18" fill="none" stroke="#1b1b1b" strokeWidth="1.300"><rect x=".7" y="3.700" width="16.300" height="11" rx="2.500" /><path d="M3 6h6v6.500H3z" fill="#1b1b1b" stroke="none" /><path d="M18.500 7v4.500" strokeWidth="2" /></svg>
        </StatusIcons>
        <Clock>
          <Fit w={60}>10:05 PM</Fit>
          <Fit w={76}>17-02-2023</Fit>
        </Clock>
        <Count>5</Count>
      </Tray>
    </Taskbar>
  );
}

const Desktop = styled.div`
  width: 1920px;
  height: 1080px;
  overflow: hidden;
`;

export default function App() {
  return (
    <Desktop>
      <Global />
      <BrowserChrome />
      <WebPage />
      <WindowsTaskbar />
    </Desktop>
  );
}
